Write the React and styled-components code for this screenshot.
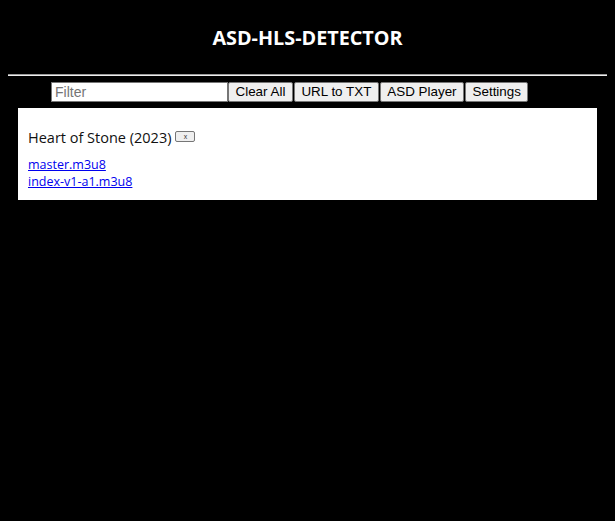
import React from "react";
import styled, { createGlobalStyle } from "styled-components";

const Global = createGlobalStyle`
  html, body { background: #000; }
  body { margin: 8px; font-family: "Open Sans", "Noto Sans", sans-serif; }
`;

const Title = styled.h1`
  margin: 0;
  padding: 16px 0 0;
  height: 50px;
  box-sizing: border-box;
  text-align: center;
  color: #fff;
  font-size: 19.8px;
  font-weight: 700;
  line-height: 27px;
`;

const Rule = styled.hr`
  margin: 16px 0 0;
  border: 0;
  border-top: 1px solid #9a9a9a;
  border-bottom: 1px solid #eee;
  height: 0;
`;

const Toolbar = styled.div`
  display: flex;
  align-items: stretch;
  margin: 6px 0 0 43px;
  height: 20px;
`;

const FilterInput = styled.input`
  box-sizing: border-box;
  width: 177px;
  height: 20px;
  padding: 1px 3px;
  border: 1px solid #767676;
  background: #fff;
  font-family: "Liberation Sans", Arial, sans-serif;
  font-size: 14px;
  color: #000;
  outline: none;
  &::placeholder { color: #757575; }
`;

const ToolButton = styled.button`
  box-sizing: border-box;
  height: 20px;
  margin-left: ${(p) => (p.$first ? "0" : "1px")};
  padding: 0 6.5px;
  border: 1px solid #767676;
  border-radius: 2px;
  background: #efefef;
  color: #000;
  font-family: "Liberation Sans", Arial, sans-serif;
  font-size: 13.4px;
  line-height: 16px;
  white-space: nowrap;
  cursor: pointer;
`;

const Card = styled.section`
  margin: 6px 10px 0;
  padding: 20px 10px 10px;
  background: #fff;
`;

const Heading = styled.div`
  display: flex;
  align-items: center;
  gap: 4px;
  font-size: 14.5px;
  line-height: 19px;
  color: #111;
  font-weight: 500;
`;

const CloseButton = styled.button`
  box-sizing: border-box;
  width: 20px;
  height: 11px;
  padding: 0;
  margin-top: -2px;
  border: 1px solid #767676;
  border-radius: 2px;
  background: #efefef;
  color: #333;
  font-family: "Liberation Sans", Arial, sans-serif;
  font-size: 7px;
  line-height: 8px;
`;

const Links = styled.div`
  display: flex;
  flex-direction: column;
  margin-top: 9px;
`;

const Link = styled.a`
  color: #0000ee;
  font-size: 12.5px;
  line-height: 17px;
  text-decoration: underline;
  align-self: flex-start;
`;

export default function App() {
  return (
    <>
      <Global />
      <Title>ASD-HLS-DETECTOR</Title>
      <Rule />
      <Toolbar>
        <FilterInput placeholder="Filter" />
        <ToolButton $first>Clear All</ToolButton>
        <ToolButton>URL to TXT</ToolButton>
        <ToolButton>ASD Player</ToolButton>
        <ToolButton>Settings</ToolButton>
      </Toolbar>
      <Card>
        <Heading>
          Heart of Stone (2023)
          <CloseButton>x</CloseButton>
        </Heading>
        <Links>
          <Link href="#">master.m3u8</Link>
          <Link href="#">index-v1-a1.m3u8</Link>
        </Links>
      </Card>
    </>
  );
}
